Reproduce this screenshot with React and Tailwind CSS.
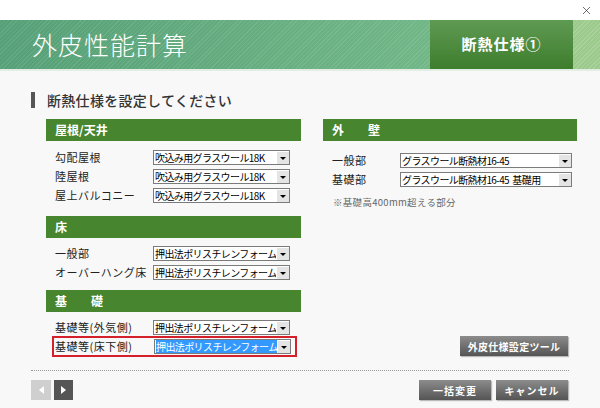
import { X } from 'lucide-react'

const font = { fontFamily: '"Noto Sans CJK JP", "Noto Sans", sans-serif' }

function FakeSelect({ value, width, focused }) {
    return (
        <div className={`flex h-[15px] ${width} border border-[#7b7b7b] bg-white`}>
            <div className="flex-1 min-w-0 overflow-hidden whitespace-pre pl-[1px] text-[10px] tracking-[-0.6px] leading-[13px] text-black">
                <span className={focused ? 'bg-[#3399ff] text-white pr-[2px] block w-full' : ''}>{value}</span>
            </div>
            <div className="w-[13px] h-[13px] shrink-0 bg-[#e4e4e4] border-l border-t border-white border-r-[#808080] border-b-[#808080] flex items-center justify-center">
                <div className="w-0 h-0 border-l-[3px] border-r-[3px] border-t-[3px] border-l-transparent border-r-transparent border-t-black" />
            </div>
        </div>
    )
}

function SectionBar({ children }) {
    return (
        <div className="h-[22px] bg-[#47852e] flex items-center pl-[9px] text-[12px] font-bold text-white whitespace-pre">
            {children}
        </div>
    )
}

function Row({ label, value, labelW = 'w-[98px]', selW = 'w-[137px]', focused }) {
    return (
        <div className="h-[19px] flex items-center pl-[9px]">
            <span className={`${labelW} shrink-0 text-[11px] tracking-[0.5px] text-[#222] whitespace-nowrap`}>{label}</span>
            <FakeSelect value={value} width={selW} focused={focused} />
        </div>
    )
}

function GrayButton({ children, className = '' }) {
    return (
        <button className={`h-[20px] bg-gradient-to-b from-[#8c8c8c] to-[#555] text-white text-[10px] font-bold tracking-[0.3px] shadow-[1px_1px_1px_rgba(0,0,0,0.25)] ${className}`}>
            {children}
        </button>
    )
}

export default function App() {
    const glass = '吹込み用グラスウール18K'
    const xps = '押出法ポリスチレンフォーム3種'
    return (
        <div className="w-[600px] h-[408px] bg-[#f8f8f8] overflow-hidden flex flex-col" style={font}>
            {/* top strip */}
            <div className="h-[20px] bg-white flex justify-end items-center pr-[7px]">
                <X size={13} strokeWidth={1.3} className="text-[#333]" />
            </div>

            {/* header */}
            <div className="h-[49px] flex bg-[image:repeating-linear-gradient(135deg,rgba(255,255,255,0.09)_0_1px,transparent_1px_3px),linear-gradient(to_right,#55a077,#7cbf8d)]">
                <div className="flex-1 flex items-center pl-[32px] text-[25px] font-light text-white tracking-[1px]">外皮性能計算</div>
                <div className="w-[143px] bg-gradient-to-b from-[#5f9a52] to-[#3d7d2c] flex items-center justify-center text-[15px] font-bold text-white tracking-[1px]">
                    断熱仕様①
                </div>
                <div className="w-[27px] bg-[image:repeating-linear-gradient(135deg,rgba(255,255,255,0.15)_0_1px,transparent_1px_3px),linear-gradient(#9cca8c,#9cca8c)]" />
            </div>
            <div className="h-[2px] bg-[#e3ede4]" />

            <div className="pl-[31px] pr-[23px] flex-1 flex flex-col">
                {/* heading */}
                <div className="mt-[21px] flex items-center h-[16px]">
                    <div className="w-[4px] h-[16px] bg-[#555]" />
                    <span className="ml-[12px] text-[14px] font-medium text-[#333] tracking-[0.3px]">断熱仕様を設定してください</span>
                </div>

                <div className="mt-[11px] flex gap-[22px] pl-[15px]">
                    {/* left */}
                    <div className="w-[255px] flex flex-col">
                        <SectionBar>屋根/天井</SectionBar>
                        <div className="mt-[7px]">
                            <Row label="勾配屋根" value={glass} />
                            <Row label="陸屋根" value={glass} />
                            <Row label="屋上バルコニー" value={glass} />
                        </div>
                        <div className="mt-[11px]">
                            <SectionBar>床</SectionBar>
                        </div>
                        <div className="mt-[6px]">
                            <Row label="一般部" value={xps} />
                            <Row label="オーバーハング床" value={xps} />
                        </div>
                        <div className="mt-[8px]">
                            <SectionBar>基　　礎</SectionBar>
                        </div>
                        <div className="mt-[6px]">
                            <Row label="基礎等(外気側)" value={xps} />
                            <div className="ml-[6px] w-[245px] h-[21px] border-2 border-[#d3202a] flex items-center pl-[1px] -mt-[1px]">
                                <span className="w-[99px] shrink-0 text-[11px] tracking-[0.5px] text-[#222] whitespace-nowrap">基礎等(床下側)</span>
                                <FakeSelect value={xps} width="w-[137px]" focused />
                            </div>
                        </div>
                    </div>

                    {/* right */}
                    <div className="w-[254px] flex flex-col">
                        <SectionBar>外　　壁</SectionBar>
                        <div className="mt-[10px]">
                            <Row label="一般部" value="グラスウール断熱材16-45" labelW="w-[68px]" selW="w-[172px]" />
                            <Row label="基礎部" value="グラスウール断熱材16-45  基礎用" labelW="w-[68px]" selW="w-[172px]" />
                        </div>
                        <div className="mt-[6px] pl-[10px] text-[9.5px] tracking-[0.3px] text-[#666]">※基礎高400mm超える部分</div>
                        <div className="mt-auto mb-[1px] flex justify-end pr-[9px]">
                            <GrayButton className="w-[108px]">外皮仕様設定ツール</GrayButton>
                        </div>
                    </div>
                </div>

                {/* dotted divider */}
                <div className="mt-[13px] w-[538px] border-t border-dotted border-[#999]" />

                {/* footer */}
                <div className="mt-[9px] flex items-center">
                    <div className="w-[20px] h-[20px] bg-[#cfcfcf] flex items-center justify-center">
                        <div className="w-0 h-0 border-t-[4px] border-b-[4px] border-r-[5px] border-t-transparent border-b-transparent border-r-white" />
                    </div>
                    <div className="ml-[3px] w-[19px] h-[20px] bg-[#555] flex items-center justify-center">
                        <div className="w-0 h-0 border-t-[4px] border-b-[4px] border-l-[5px] border-t-transparent border-b-transparent border-l-white" />
                    </div>
                    <div className="ml-auto mr-[9px] flex gap-[5px]">
                        <GrayButton className="w-[72px] tracking-[1px]">一括変更</GrayButton>
                        <GrayButton className="w-[72px] tracking-[1px]">キャンセル</GrayButton>
                    </div>
                </div>
            </div>
        </div>
    )
}
